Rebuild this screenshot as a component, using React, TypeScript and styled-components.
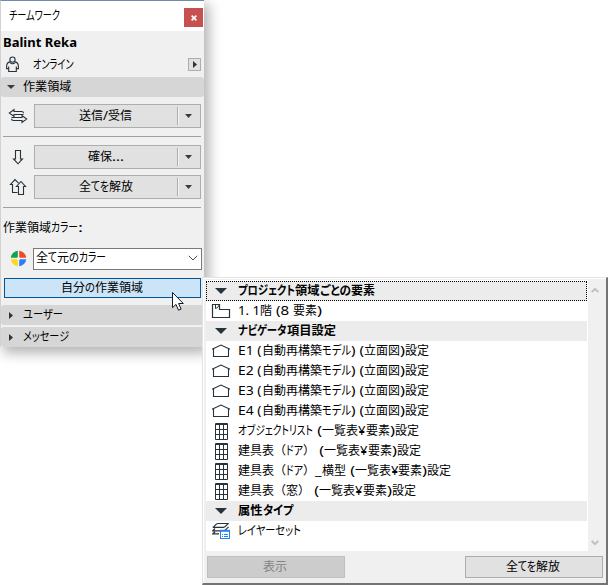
import React, { useLayoutEffect, useRef, useState } from 'react';
import styled, { createGlobalStyle, css } from 'styled-components';

const GlobalStyle = createGlobalStyle`
  * { box-sizing: border-box; }
  body {
    margin: 0;
    background: #fff;
    color: #000;
    font: 12px/20px 'Noto Sans', 'Noto Sans CJK JP', sans-serif;
    overflow: hidden;
  }
`;

/* ---------- Condensed text runs ---------- */

type RunData = [text: string, width: number];

const Line = styled.span<{ $bold?: boolean }>`
  display: inline-flex;
  flex: none;
  white-space: pre;
  font-weight: ${p => (p.$bold ? 700 : 400)};
`;
const RunBox = styled.span<{ $w: number }>`
  display: block;
  width: ${p => p.$w}px;
`;
const RunText = styled.span<{ $kana: boolean }>`
  display: inline-block;
  transform-origin: 0 50%;
  ${p => p.$kana && css`
    font-size: 12.5px;
    font-feature-settings: 'palt';
  `}
`;

const KANA_ONLY = /^[\u3040-\u30ff]+$/;

function Run({ text, width }: { text: string; width: number }) {
  const ref = useRef<HTMLSpanElement>(null);
  const [scale, setScale] = useState(1);
  useLayoutEffect(() => {
    if (ref.current && ref.current.offsetWidth) {
      setScale(width / parseFloat(getComputedStyle(ref.current).width));
    }
  }, [text, width]);
  return (
    <RunBox $w={width}>
      <RunText ref={ref} $kana={KANA_ONLY.test(text)} style={{ transform: `scaleX(${scale})` }}>{text}</RunText>
    </RunBox>
  );
}

function Label({ runs, bold }: { runs: RunData[]; bold?: boolean }) {
  return (
    <Line $bold={bold}>
      {runs.map(([t, w], i) => <Run key={i} text={t} width={w} />)}
    </Line>
  );
}

/* ---------- Palette ---------- */

const Screen = styled.main`
  position: relative;
  width: 608px;
  height: 585px;
  overflow: hidden;
`;
const Palette = styled.section`
  display: flex;
  flex-direction: column;
  width: 204px;
  height: 347px;
  background: #f0f0f0;
  border-top: 1px solid #6f8dab;
  border-left: 1px solid #d2d2d2;
  box-shadow: 4px 5px 12px 1px rgba(0, 0, 0, 0.3);
`;
const TitleBar = styled.header`
  display: flex;
  justify-content: space-between;
  height: 30px;
  padding: 5px 1px 0 8px;
  background: #fff;
`;
const CloseButton = styled.button`
  display: grid;
  place-items: center;
  width: 19px;
  height: 19px;
  margin-top: 2px;
  padding: 0;
  border: 0;
  background: #c75050;
`;
const UserName = styled.div`
  height: 22px;
  padding: 2px 0 0 2px;
`;
const StatusRow = styled.div`
  display: flex;
  align-items: center;
  height: 23px;
  padding: 0 3px 0 4px;
  margin-bottom: 1px;
`;
const StatusText = styled.div`
  flex: 1;
  padding-left: 13px;
`;
const MoreButton = styled.button`
  display: grid;
  place-items: center;
  width: 13px;
  height: 13px;
  padding: 0;
  border: 1px solid #adadad;
  background: #e1e1e1;
`;
const SectionBar = styled.div<{ $gap?: number }>`
  display: flex;
  align-items: center;
  flex: none;
  height: 20px;
  margin-bottom: ${p => p.$gap ?? 0}px;
  padding-left: 6px;
  gap: 8px;
  border-radius: 3px;
  background: #d6d6d6;
`;
const IconSlot = styled.span`
  display: flex;
  justify-content: center;
  width: 8px;
`;
const ActionRow = styled.div<{ $gap: number }>`
  display: flex;
  align-items: center;
  height: 24px;
  margin-bottom: ${p => p.$gap}px;
  padding: 0 3px 0 7px;
  gap: 6px;
`;
const SplitButton = styled.div`
  display: flex;
  width: 167px;
  height: 24px;
  border: 1px solid #adadad;
  background: #e1e1e1;
`;
const SplitMain = styled.div`
  display: grid;
  place-items: center;
  flex: 1;
  padding: 0 1px 1px 0;
`;
const SplitArrow = styled.div`
  display: grid;
  place-items: center;
  width: 23px;
  margin: 2px 0;
  padding-right: 2px;
  border-left: 1px solid #adadad;
  box-shadow: inset 1px 0 #f4f4f4;
`;
const Rule = styled.hr<{ $gap: number }>`
  width: 198px;
  height: 1px;
  flex: none;
  margin: 0 0 ${p => p.$gap}px 2px;
  border: 0;
  background: #a0a0a0;
`;
const FieldLabel = styled.div`
  height: 20px;
  margin-bottom: 9px;
  padding-left: 2px;
`;
const ColorRow = styled.div`
  display: flex;
  align-items: center;
  height: 23px;
  margin-bottom: 8px;
  padding-left: 9px;
  gap: 6px;
`;
const Select = styled.div`
  display: flex;
  align-items: center;
  justify-content: space-between;
  width: 169px;
  height: 22px;
  padding: 0 3px 2px 2px;
  border: 1px solid #7a7a7a;
  background: #fff;
`;
const buttonFace = css`
  display: flex;
  align-items: center;
  justify-content: center;
  padding: 0 2px 1px 0;
  font: inherit;
`;
const WorkspaceButton = styled.button`
  ${buttonFace}
  flex: none;
  width: 197px;
  height: 20px;
  margin: 0 0 7px 3px;
  border: 1px solid #005499;
  background: #cce4f7;
  color: #000;
`;

/* ---------- Popup ---------- */

const Popup = styled.section`
  position: absolute;
  left: 202px;
  top: 277px;
  width: 406px;
  height: 308px;
  border: solid;
  border-width: 1px 2px 2px 1px;
  border-color: #e3e3e3 #747474 #747474 #e3e3e3;
  background: #f0f0f0;
  box-shadow: inset 1px 1px #fff;
`;
const ListArea = styled.div`
  display: flex;
  height: 271px;
  margin: 2px 0 5px 3px;
`;
const List = styled.div`
  width: 382px;
  padding: 1px 1px 0 0;
  background: #fff;
`;
const Row = styled.div<{ $group?: boolean; $focus?: boolean }>`
  display: flex;
  align-items: center;
  height: 20px;
  background: ${p => (p.$group ? '#ececec' : 'transparent')};
  outline: ${p => (p.$focus ? '1px dotted #000' : 'none')};
  outline-offset: -1px;
`;
const IconCell = styled.div`
  display: flex;
  justify-content: center;
  width: 20px;
  margin: 0 7px 0 5px;
`;
const ScrollTrack = styled.div`
  display: flex;
  flex-direction: column;
  align-items: center;
  justify-content: space-between;
  width: 14px;
  padding: 7px 0 5px;
`;
const Footer = styled.footer`
  display: flex;
  justify-content: space-between;
  padding: 0 3px 0 4px;
`;
const FooterButton = styled.button`
  ${buttonFace}
  width: 138px;
  height: 22px;
  border: 1px solid #adadad;
  background: #e1e1e1;
  color: #000;
  &:disabled {
    border-color: #bfbfbf;
    background: #ccc;
    color: #838383;
  }
`;
const Pointer = styled.svg`
  position: absolute;
  left: 171px;
  top: 291px;
`;

/* ---------- Icons ---------- */

const INK = '#26333b';

const ArrowDown = ({ w = 7, h = 4, fill = '#3c3c3c' }: { w?: number; h?: number; fill?: string }) => (
  <svg width={w} height={h} viewBox="0 0 10 6" preserveAspectRatio="none"><path d="M0 0h10L5 6z" fill={fill} /></svg>
);
const ArrowRight = () => (
  <svg width="4" height="7" viewBox="0 0 4 7"><path d="M0 0v7l4-3.5z" fill="#333" /></svg>
);
const PersonIcon = () => (
  <svg width="15" height="18" viewBox="0 0 15 18" fill="none" stroke={INK} strokeWidth="1.1">
    <circle cx="7.500" cy="3.600" r="2.600" />
    <path d="M5 5.900C2.500 6.300 1.600 7.700 1.600 10.500v2.100h2.100v2.900h7.600v-2.900h2.100v-2.100c0-2.800-.9-4.200-3.400-4.600M3.700 12.800v-2.300m7.600 2.300v-2.300M5 6.500c1.200 1.700 3.800 1.700 5 0" />
  </svg>
);
const SwapIcon = () => (
  <svg width="20" height="16" viewBox="0 0 20 16" fill="none" stroke={INK} strokeWidth="1.1">
    <path d="M15.500 6.500H6v2L1.300 5 6 1.500v2h7.500c1.300 0 2 .6 2 1.700M3.500 9.500H14v-2l4.700 3.500-4.700 3.500v-2H5.500c-1.300 0-2-.6-2-1.700" />
  </svg>
);
const ReserveIcon = () => (
  <svg width="20" height="16" viewBox="0 0 20 16" fill="none" stroke={INK} strokeWidth="1.1">
    <path d="M7.500 1.500h5v8.500h2L10 14.800 5.500 10h2z" />
  </svg>
);
const ReleaseIcon = () => (
  <svg width="20" height="18" viewBox="0 0 20 18" fill="none" stroke={INK} strokeWidth="1.1">
    <path d="M9.500 14.500h-5V6.500h-2L7 1.600l3.500 3.600M10.500 16.500v-8h-2L13 3.500l4.500 5h-2v8z" />
  </svg>
);
const ColorIcon = () => (
  <svg width="17" height="17" viewBox="0 0 17 17">
    <path d="M7.800 7.800V.8a7.600 7.600 0 0 0-7 7z" fill="#12a150" />
    <path d="M9.200 7.800V.8a7.600 7.600 0 0 1 7 7z" fill="#f04a23" />
    <path d="M7.800 9.200v7a7.600 7.600 0 0 1-7-7z" fill="#ffd91a" />
    <path d="M9.200 9.200v7a7.600 7.600 0 0 0 7-7z" fill="#2d7ff0" />
    <circle cx="8.500" cy="8.500" r="1.600" fill="#f0f0f0" />
  </svg>
);
const Chevron = () => (
  <svg width="10" height="6" viewBox="0 0 10 6" fill="none" stroke="#4a4a4a"><path d="M.8.8 5 5 9.200.8" /></svg>
);
const ScrollChevron = ({ down }: { down?: boolean }) => (
  <svg width="8" height="6" viewBox="0 0 8 6" fill="none" stroke="#bfbfbf" strokeWidth="2">
    <path d={down ? 'M.7.9 4 4.200 7.300.9' : 'M.7 5.100 4 1.800l3.300 3.300'} />
  </svg>
);
const StoryIcon = () => (
  <svg width="20" height="16" viewBox="0 0 20 16" fill="none" stroke={INK}>
    <path d="M1.500 1.500h7v5h10v8h-17z" strokeWidth="1.200" />
    <path d="M4.500 1.500v4c2-.5 3.300-2 3.700-4" />
  </svg>
);
const ElevationIcon = () => (
  <svg width="20" height="14" viewBox="0 0 20 14" fill="none" stroke={INK} strokeWidth="1.100">
    <path d="M1 5.300 10 1l9 4.300M2.500 4.800v7.700h15V4.800" />
  </svg>
);
const TableIcon = () => (
  <svg width="13" height="17" viewBox="0 0 13 17">
    <rect width="13" height="17" rx="1" fill={INK} />
    <path fill="#fff" d="M1 2h3v4H1zM5 2h3v4H5zM9 2h3v4H9zM1 7h3v4H1zM5 7h3v4H5zM9 7h3v4H9zM1 12h3v4H1zM5 12h3v4H5zM9 12h3v4H9z" />
  </svg>
);
const LayerIcon = () => (
  <svg width="18" height="18" viewBox="0 0 18 18" fill="none">
    <path d="M.8 5.300C3 4.500 3.500 1.500 6 1.500h10.700C14.500 2 14 5.300 11.500 5.300zM3 6.500.8 8.800h10.700c2.500 0 3-2.800 5.200-3.800M3 9.800.8 11.800H7" stroke={INK} strokeWidth="1.200" />
    <rect x="8.500" y="8.500" width="9" height="8" fill="#fff" stroke="#2880f5" />
    <path d="M8 8.800h10" stroke="#2880f5" strokeWidth="2" />
    <path d="M10 12.500h1m1 0h4m-6 2h1m1 0h4" stroke="#2880f5" />
  </svg>
);

/* ---------- Data ---------- */

type Kind = 'group' | 'story' | 'elevation' | 'table' | 'layer';

const listTail: RunData[] = [[' (', 9], ['一覧表', 36], ['¥', 7.5], ['要素', 24], [')', 5], ['設定', 24]];
const elevation = (name: string): { kind: Kind; runs: RunData[] } => ({
  kind: 'elevation',
  runs: [[`${name} (`, 23.500], ['自動再構築', 60], ['モデル', 29], [') (', 13], ['立面図', 36], [')', 5], ['設定', 24]],
});

const items: { kind: Kind; runs: RunData[] }[] = [
  { kind: 'group', runs: [['プロジェクト', 57], ['領域', 24.500], ['ごとの', 31], ['要素', 24]] },
  { kind: 'story', runs: [['1. 1', 22], ['階', 12], [' (8 ', 21], ['要素', 24], [')', 5]] },
  { kind: 'group', runs: [['ナビゲータ', 48.500], ['項目設定', 49]] },
  elevation('E1'),
  elevation('E2'),
  elevation('E3'),
  elevation('E4'),
  { kind: 'table', runs: [['オブジェクトリスト', 75], ...listTail] },
  { kind: 'table', runs: [['建具表（', 48], ['ドア', 17], ['）', 12], ...listTail] },
  { kind: 'table', runs: [['建具表（', 48], ['ドア', 17], ['）', 12], ['_', 6.500], ['横型', 24], ...listTail] },
  { kind: 'table', runs: [['建具表（窓）', 72], ...listTail] },
  { kind: 'group', runs: [['属性', 24.500], ['タイプ', 30.500]] },
  { kind: 'layer', runs: [['レイヤーセット', 63]] },
];

const kindIcon: Record<Kind, React.ReactNode> = {
  group: <ArrowDown w={12} h={6} fill={INK} />,
  story: <StoryIcon />,
  elevation: <ElevationIcon />,
  table: <TableIcon />,
  layer: <LayerIcon />,
};

const releaseAll: RunData[] = [['全', 12], ['てを', 18], ['解放', 24]];

function Action({ icon, runs, gap }: { icon: React.ReactNode; runs: RunData[]; gap: number }) {
  return (
    <ActionRow $gap={gap}>
      {icon}
      <SplitButton>
        <SplitMain><Label runs={runs} /></SplitMain>
        <SplitArrow><ArrowDown /></SplitArrow>
      </SplitButton>
    </ActionRow>
  );
}

export default function App() {
  return (
    <Screen>
      <GlobalStyle />
      <Palette>
        <TitleBar>
          <Label runs={[['チームワーク', 51]]} />
          <CloseButton aria-label="閉じる">
            <svg width="6" height="6" viewBox="0 0 6 6" stroke="#fff" strokeWidth="1.600"><path d="m.6.6 4.800 4.800M5.400.6.6 5.400" /></svg>
          </CloseButton>
        </TitleBar>
        <UserName><Label bold runs={[['Balint Reka', 74]]} /></UserName>
        <StatusRow>
          <PersonIcon />
          <StatusText><Label runs={[['オンライン', 40.500]]} /></StatusText>
          <MoreButton aria-label="詳細"><ArrowRight /></MoreButton>
        </StatusRow>
        <SectionBar $gap={7}>
          <ArrowDown w={8} h={4} />
          <Label runs={[['作業領域', 48.500]]} />
        </SectionBar>
        <Action gap={8} icon={<SwapIcon />} runs={[['送信', 24], ['/', 5], ['受信', 24]]} />
        <Rule $gap={8} />
        <Action gap={6} icon={<ReserveIcon />} runs={[['確保', 24], ['...', 12]]} />
        <Action gap={8} icon={<ReleaseIcon />} runs={releaseAll} />
        <Rule $gap={10} />
        <FieldLabel><Label runs={[['作業領域', 48], ['カラー', 27], [':', 5]]} /></FieldLabel>
        <ColorRow>
          <ColorIcon />
          <Select>
            <Label runs={[['全', 12], ['て', 9], ['元', 12], ['の', 10], ['カラー', 27]]} />
            <Chevron />
          </Select>
        </ColorRow>
        <WorkspaceButton><Label runs={[['自分', 24], ['の', 10], ['作業領域', 48]]} /></WorkspaceButton>
        <SectionBar $gap={2}>
          <IconSlot><ArrowRight /></IconSlot>
          <Label runs={[['ユーザー', 40]]} />
        </SectionBar>
        <SectionBar>
          <IconSlot><ArrowRight /></IconSlot>
          <Label runs={[['メッセージ', 46]]} />
        </SectionBar>
      </Palette>
      <Popup>
        <ListArea>
          <List>
            {items.map((item, i) => (
              <Row key={i} $group={item.kind === 'group'} $focus={i === 0}>
                <IconCell>{kindIcon[item.kind]}</IconCell>
                <Label bold={item.kind === 'group'} runs={item.runs} />
              </Row>
            ))}
          </List>
          <ScrollTrack>
            <ScrollChevron />
            <ScrollChevron down />
          </ScrollTrack>
        </ListArea>
        <Footer>
          <FooterButton disabled><Label runs={[['表示', 24]]} /></FooterButton>
          <FooterButton><Label runs={releaseAll} /></FooterButton>
        </Footer>
      </Popup>
      <Pointer width="14" height="21" viewBox="0 0 14 21">
        <path d="M1.500 1.500v15.200l3.500-3.300 2.500 5.800 2.600-1.100-2.500-5.600h4.700z" fill="#fff" stroke="#111827" />
      </Pointer>
    </Screen>
  );
}
